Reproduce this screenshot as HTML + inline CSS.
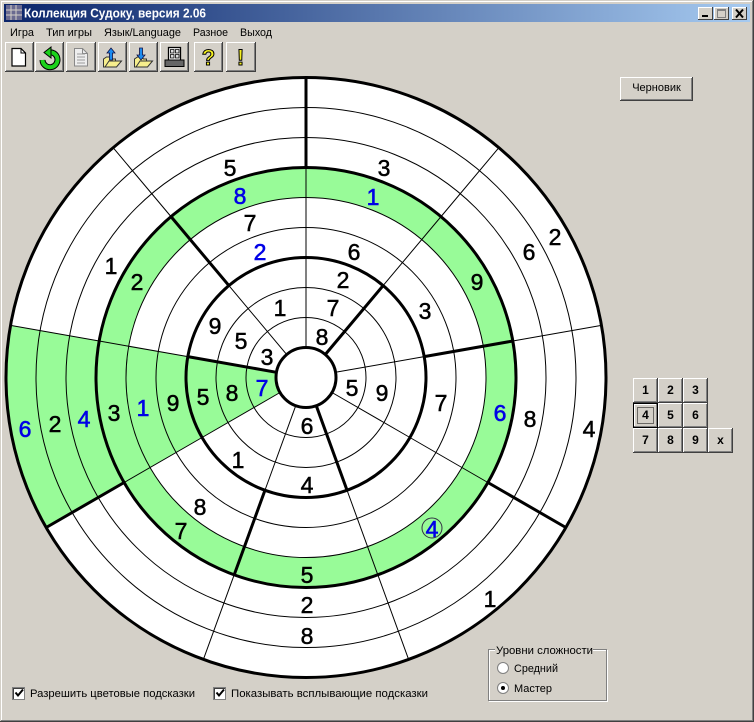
<!DOCTYPE html>
<html><head><meta charset="utf-8"><style>
html,body{margin:0;padding:0;background:#d4d0c8}
#w{position:relative;width:754px;height:722px;overflow:hidden;background:#d4d0c8;font-family:"Liberation Sans",sans-serif;font-size:11px;color:#000}
.b{position:absolute;background:#d4d0c8;box-shadow:inset -1px -1px #404040,inset 1px 1px #fff,inset -2px -2px #808080;text-align:center;box-sizing:border-box}
.k{width:25px;height:25px;line-height:25px;font-weight:bold;font-size:12px}
svg{position:absolute;left:0;top:0}
</style></head><body><div id="w">
<div class="b" style="left:5px;top:42px;width:29px;height:30px"></div>
<div class="b" style="left:35px;top:42px;width:29px;height:30px"></div>
<div class="b" style="left:66px;top:42px;width:30px;height:30px"></div>
<div class="b" style="left:98px;top:42px;width:29px;height:30px"></div>
<div class="b" style="left:129px;top:42px;width:29px;height:30px"></div>
<div class="b" style="left:160px;top:42px;width:29px;height:30px"></div>
<div class="b" style="left:194px;top:42px;width:29px;height:30px"></div>
<div class="b" style="left:226px;top:42px;width:30px;height:30px"></div>
<div class="b" style="left:620px;top:77px;width:73px;height:24px;line-height:23px">Черновик</div>
<div class="b k" style="left:633px;top:378px">1</div>
<div class="b k" style="left:658px;top:378px">2</div>
<div class="b k" style="left:683px;top:378px">3</div>
<div class="b k" style="left:633px;top:403px;box-shadow:inset 0 0 0 1px #000,inset -2px -2px #808080,inset 2px 2px #fff">4</div>
<div class="b k" style="left:658px;top:403px">5</div>
<div class="b k" style="left:683px;top:403px">6</div>
<div class="b k" style="left:633px;top:428px">7</div>
<div class="b k" style="left:658px;top:428px">8</div>
<div class="b k" style="left:683px;top:428px">9</div>
<div class="b k" style="left:708px;top:428px">x</div>
<svg width="754" height="722" viewBox="0 0 754 722" xmlns="http://www.w3.org/2000/svg" font-family="'Liberation Sans',sans-serif">
<defs><linearGradient id="tb" x1="0" x2="1" y1="0" y2="0"><stop offset="0" stop-color="#0a246a"/><stop offset="1" stop-color="#a6caf0"/></linearGradient></defs>
<!-- window frame -->
<path d="M0.5 722V0.5H754" fill="none" stroke="#d4d0c8"/>
<path d="M1.5 720V1.5H752" fill="none" stroke="#fff"/>
<path d="M752.5 1V720.5H1" fill="none" stroke="#808080"/>
<path d="M753.5 0V721.5H0" fill="none" stroke="#404040"/>
<rect x="4" y="4" width="746" height="18" fill="url(#tb)"/>
<rect x="6" y="5" width="16" height="15" fill="#6a6a90"/>
<path d="M6 10h16M6 15h16M11 5v15M16 5v15" stroke="#d4d0c8" stroke-width="1"/>
<text x="24" y="17.5" font-size="13" font-weight="bold" fill="#fff" textLength="182" lengthAdjust="spacingAndGlyphs">Коллекция Судоку, версия 2.06</text>
<!-- window buttons -->
<rect x="698" y="7" width="15" height="13" fill="#d4d0c8"/><path d="M698.5 20V7.5H713" stroke="#fff" fill="none"/><path d="M712.5 7V19.5H698" stroke="#404040" fill="none"/>
<rect x="702" y="15" width="6" height="2" fill="#000"/>
<rect x="714" y="7" width="15" height="13" fill="#d4d0c8"/><path d="M714.5 20V7.5H729" stroke="#fff" fill="none"/><path d="M728.5 7V19.5H714" stroke="#404040" fill="none"/>
<rect x="717.5" y="9.5" width="8" height="8" fill="none" stroke="#808080"/><path d="M717 10.5h9" stroke="#808080"/>
<rect x="732" y="7" width="15" height="13" fill="#d4d0c8"/><path d="M732.5 20V7.5H747" stroke="#fff" fill="none"/><path d="M746.5 7V19.5H732" stroke="#404040" fill="none"/>
<path d="M736 9.5l7 8M743 9.5l-7 8" stroke="#000" stroke-width="2"/>
<!-- menu -->
<g font-size="11" fill="#000">
<text x="10" y="36" textLength="24" lengthAdjust="spacingAndGlyphs">Игра</text>
<text x="46" y="36" textLength="46" lengthAdjust="spacingAndGlyphs">Тип игры</text>
<text x="104" y="36" textLength="77" lengthAdjust="spacingAndGlyphs">Язык/Language</text>
<text x="193" y="36" textLength="35" lengthAdjust="spacingAndGlyphs">Разное</text>
<text x="240" y="36" textLength="32" lengthAdjust="spacingAndGlyphs">Выход</text>
</g>
<!-- toolbar icons -->
<path d="M12 48.5h9l4.5 4.5v13h-13.5z" fill="#fff" stroke="#000" stroke-width="1.2"/><path d="M21 48.5v4.5h4.5" fill="none" stroke="#000"/>
<path d="M48 52.5A7.5 7.5 0 1 1 42.5 60" fill="none" stroke="#000" stroke-width="6"/>
<path d="M48 52.5A7.5 7.5 0 1 1 42.5 60" fill="none" stroke="#1bd21b" stroke-width="4"/>
<path d="M51 47L44 52.5 51 58z" fill="#1bd21b" stroke="#000"/>
<path d="M74.5 48.5h8l5 5v12.5h-13z" fill="#eee" stroke="#888"/><path d="M82.5 48.5v5h5" fill="none" stroke="#888"/><path d="M77 54h8M77 57h8M77 60h8M77 63h8" stroke="#999"/>
<path d="M103.5 67v-8l3-2h4l2 2h3v2h6l-5 6z" fill="#f7ee8c" stroke="#333"/><path d="M105 67l4-6h13" fill="none" stroke="#333"/>
<path d="M111 48l4 5h-2.5v7h-3v-7h-2.500z" fill="#1c8cf0" stroke="#114" stroke-width=".8"/>
<path d="M134.5 67v-8l3-2h4l2 2h3v2h6l-5 6z" fill="#f7ee8c" stroke="#333"/><path d="M136 67l4-6h13" fill="none" stroke="#333"/>
<path d="M141 60l4-5h-2.500v-7h-3v7h-2.500z" fill="#1c8cf0" stroke="#114" stroke-width=".8"/>
<rect x="168.500" y="47.500" width="12" height="13" fill="#fff" stroke="#000" stroke-width="1.300"/>
<path d="M170.500 49.500h3.500v3.500h-3.500zM175.500 49.500h3.500v3.500h-3.500zM170.500 54.500h3.500v3.500h-3.500zM175.500 54.500h3.500v3.500h-3.500z" fill="#ddd" stroke="#000" stroke-width=".8"/>
<path d="M165 60h19v6.500h-19z" fill="#666" stroke="#000"/>
<text x="208.500" y="65" font-size="22" font-weight="bold" text-anchor="middle" fill="#f5f020" stroke="#000" stroke-width="1">?</text>
<text x="240.500" y="65" font-size="22" font-weight="bold" text-anchor="middle" fill="#f5f020" stroke="#000" stroke-width="1">!</text>
<!-- board -->
<circle cx="306" cy="377.500" r="300" fill="#fff"/>
<path fill-rule="evenodd" fill="#98fb98" d="M306 167.500a210 210 0 1 1 -0.01 0zM306 197.500a180 180 0 1 0 0.01 0z"/>
<path fill="#98fb98" d="M280.020 392.500L46.190 527.500A300 300 0 0 1 10.560 325.410L276.460 372.290A30 30 0 0 0 280.020 392.500Z"/>
<g fill="none" stroke="#000" stroke-width="1">
<circle cx="306" cy="377.500" r="60"/><circle cx="306" cy="377.500" r="90"/>
<circle cx="306" cy="377.500" r="150"/><circle cx="306" cy="377.500" r="180"/>
<circle cx="306" cy="377.500" r="240"/><circle cx="306" cy="377.500" r="270"/>
<!-- thin spokes: inner -->
<path d="M306 347.500L306 257.500M335.540 372.290L424.180 356.660M331.980 392.500L409.920 437.500M295.740 405.690L264.960 490.260M280.020 392.500L202.080 437.500M286.720 354.520L228.870 285.580"/>
<!-- thin spokes: middle -->
<path d="M306 257.500L306 167.500M383.130 285.580L440.990 216.630M409.920 437.500L487.870 482.500M347.040 490.260L377.820 574.830M202.080 437.500L124.130 482.500M187.820 356.660L99.190 341.030"/>
<!-- thin spokes: outer -->
<path d="M440.990 216.630L498.840 147.690M512.810 341.030L601.440 325.410M377.820 574.830L408.610 659.410M234.180 574.830L203.390 659.410M99.190 341.030L10.560 325.410M171.010 216.630L113.160 147.690"/>
</g>
<g fill="none" stroke="#000" stroke-width="3">
<path d="M325.280 354.520L383.130 285.580M316.260 405.690L347.040 490.260M276.460 372.290L187.820 356.660"/>
<path d="M424.180 356.660L512.810 341.030M264.960 490.260L234.180 574.830M228.870 285.580L171.010 216.630"/>
<path d="M306 167.500L306 77.500M487.870 482.500L565.810 527.500M124.130 482.500L46.190 527.500"/>
<circle cx="306" cy="377.500" r="120"/><circle cx="306" cy="377.500" r="210"/><circle cx="306" cy="377.500" r="300"/>
<circle cx="306" cy="377.500" r="30" fill="#fff"/>
</g>
<!-- digits -->
<g font-size="23" text-anchor="middle" fill="#000" stroke="#000" stroke-width=".5">
<text x="230" y="176">5</text><text x="384" y="176">3</text>
<text x="250" y="231">7</text><text x="354" y="260">6</text>
<text x="555" y="245">2</text><text x="529" y="260">6</text>
<text x="111" y="274">1</text><text x="137" y="290">2</text><text x="477" y="290">9</text>
<text x="343" y="288">2</text><text x="333" y="316">7</text><text x="280" y="316">1</text>
<text x="425" y="319">3</text><text x="215" y="334">9</text><text x="241" y="349">5</text>
<text x="322" y="345">8</text><text x="267" y="365">3</text>
<text x="352" y="396">5</text><text x="382" y="401">9</text><text x="441" y="411">7</text>
<text x="530" y="427">8</text><text x="589" y="437">4</text>
<text x="55" y="432">2</text><text x="114" y="421">3</text><text x="173" y="411">9</text>
<text x="203" y="405">5</text><text x="232" y="401">8</text>
<text x="307" y="434">6</text><text x="238" y="468">1</text><text x="307" y="493">4</text>
<text x="200" y="515">8</text><text x="181" y="539">7</text>
<text x="307" y="583">5</text><text x="490" y="607">1</text><text x="307" y="613">2</text><text x="307" y="644">8</text>
</g>
<g font-size="23" text-anchor="middle" fill="#0000e6" stroke="#0000e6" stroke-width=".6">
<text x="240" y="204">8</text><text x="373" y="205">1</text><text x="260" y="260">2</text>
<text x="500" y="421">6</text><text x="25" y="437">6</text><text x="84" y="427">4</text>
<text x="143" y="416">1</text><text x="262" y="396">7</text><text x="432" y="537">4</text>
</g>
<circle cx="432" cy="528" r="10" fill="none" stroke="#334" stroke-width="1"/>
<!-- checkboxes -->
<g>
<rect x="12.500" y="687.500" width="12" height="12" fill="#fff" stroke="#808080"/>
<path d="M13.500 699V688.500H24" fill="none" stroke="#404040"/>
<path d="M15.500 692.500l2.500 3 5-6" fill="none" stroke="#000" stroke-width="2"/>
<rect x="213.500" y="687.500" width="12" height="12" fill="#fff" stroke="#808080"/>
<path d="M214.500 699V688.500H225" fill="none" stroke="#404040"/>
<path d="M216.500 692.500l2.500 3 5-6" fill="none" stroke="#000" stroke-width="2"/>
</g>
<text x="30" y="697" font-size="11" textLength="165" lengthAdjust="spacingAndGlyphs">Разрешить цветовые подсказки</text>
<text x="231" y="697" font-size="11" textLength="197" lengthAdjust="spacingAndGlyphs">Показывать всплывающие подсказки</text>
<!-- group box -->
<rect x="489.500" y="650.500" width="118" height="51" fill="none" stroke="#fff"/>
<rect x="488.500" y="649.500" width="118" height="51" fill="none" stroke="#808080"/>
<rect x="495" y="646" width="98" height="8" fill="#d4d0c8"/>
<text x="496" y="654" font-size="11" textLength="97" lengthAdjust="spacingAndGlyphs">Уровни сложности</text>
<circle cx="503" cy="668" r="5.500" fill="#fff" stroke="#808080"/>
<circle cx="503" cy="688" r="5.500" fill="#fff" stroke="#808080"/><circle cx="503" cy="688" r="2" fill="#000"/>
<text x="514" y="672" font-size="11" textLength="44" lengthAdjust="spacingAndGlyphs">Средний</text>
<text x="514" y="692" font-size="11" textLength="38" lengthAdjust="spacingAndGlyphs">Мастер</text>
<!-- focus dotted -->
<rect x="637.500" y="407.500" width="16" height="16" fill="none" stroke="#000" stroke-dasharray="1 1"/>
</svg>
</div></body></html>
